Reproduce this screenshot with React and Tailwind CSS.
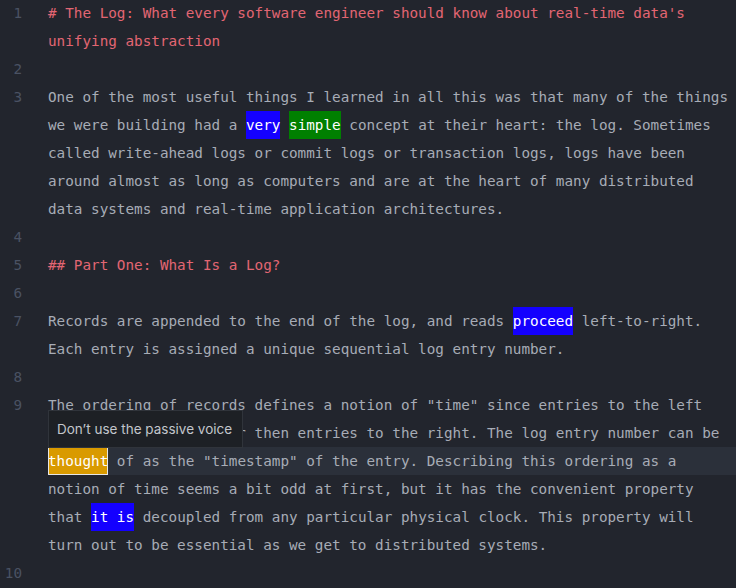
import React from "react";

const mono = { fontFamily: '"DejaVu Sans Mono", "Liberation Mono", monospace' };

// each logical line: n, kind, visual rows (arrays of segments)
const lines = [
  {
    n: 1,
    kind: "h",
    rows: [
      ["# The Log: What every software engineer should know about real-time data's"],
      ["unifying abstraction"],
    ],
  },
  { n: 2, rows: [[""]] },
  {
    n: 3,
    rows: [
      ["One of the most useful things I learned in all this was that many of the things"],
      ["we were building had a ", { t: "very", c: "blue" }, " ", { t: "simple", c: "green" }, " concept at their heart: the log. Sometimes"],
      ["called write-ahead logs or commit logs or transaction logs, logs have been"],
      ["around almost as long as computers and are at the heart of many distributed"],
      ["data systems and real-time application architectures."],
    ],
  },
  { n: 4, rows: [[""]] },
  { n: 5, kind: "h", rows: [["## Part One: What Is a Log?"]] },
  { n: 6, rows: [[""]] },
  {
    n: 7,
    rows: [
      ["Records are appended to the end of the log, and reads ", { t: "proceed", c: "blue" }, " left-to-right."],
      ["Each entry is assigned a unique sequential log entry number."],
    ],
  },
  { n: 8, rows: [[""]] },
  {
    n: 9,
    rows: [
      ['The ordering of records defines a notion of "time" since entries to the left'],
      ["are defined to be older then entries to the right. The log entry number can be"],
      [{ t: "thought", c: "orange" }, ' of as the "timestamp" of the entry. Describing this ordering as a'],
      ["notion of time seems a bit odd at first, but it has the convenient property"],
      ["that ", { t: "it is", c: "blue" }, " decoupled from any particular physical clock. This property will"],
      ["turn out to be essential as we get to distributed systems."],
    ],
  },
  { n: 10, rows: [[""]] },
];

const marks = {
  blue: "bg-[#1400ff] text-white",
  green: "bg-[#008000] text-white",
  orange: "bg-[#d99a00] text-white outline outline-1 outline-[#e6e6e6] -outline-offset-1",
};

function Segment({ s }) {
  if (typeof s === "string") return <span>{s}</span>;
  return <span className={`inline-block h-7 ${marks[s.c]}`}>{s.t}</span>;
}

export default function App() {
  return (
    <div className="relative w-[736px] h-[588px] overflow-hidden bg-[#22252d] text-[14.3px] leading-7" style={mono}>
      <div className="-mt-px">
        {lines.map((line) => (
          <div key={line.n}>
            {line.rows.map((row, i) => {
              const current = line.n === 9 && i === 2;
              return (
                <div key={i} className="flex h-7">
                  <div className="w-[22px] text-right text-[#4a5263] shrink-0">{i === 0 ? line.n : ""}</div>
                  <div
                    className={`ml-[26px] flex-1 whitespace-pre ${
                      line.kind === "h" ? "text-[#e26673]" : "text-[#a7acb6]"
                    } ${current ? "bg-[#2b303a]" : ""}`}
                  >
                    {row.map((s, j) => (
                      <Segment key={j} s={s} />
                    ))}
                  </div>
                </div>
              );
            })}
          </div>
        ))}
      </div>

      {/* lint tooltip */}
      <div
        className="absolute left-[48px] top-[410px] w-[195px] h-[38px] bg-[#1d2025] border border-[#30343b] text-[#c3c6cc] text-[13.5px] flex items-center pl-[8px]"
        style={{ fontFamily: 'Inter, "Noto Sans", sans-serif' }}
      >
        Don’t use the passive voice
      </div>
    </div>
  );
}
